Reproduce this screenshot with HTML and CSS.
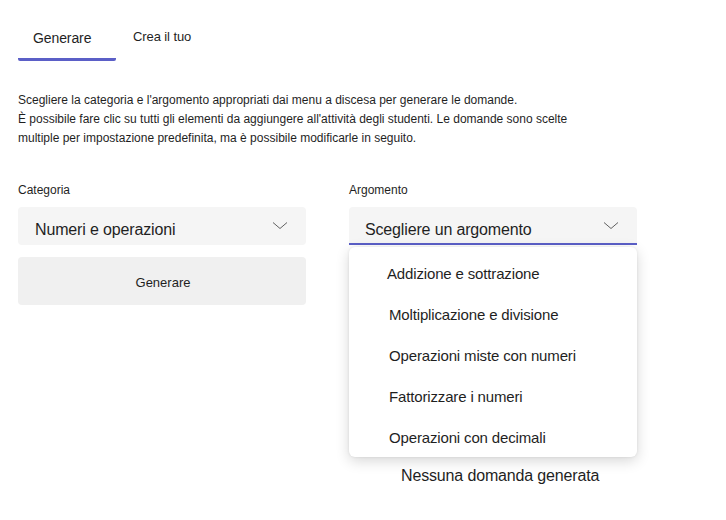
FILE: index.html
```html
<!DOCTYPE html>
<html>
<head>
<meta charset="utf-8">
<link rel="stylesheet" href="styles.css">
</head>
<body>
<div class="page">
  <div class="tabs">
    <div class="tab active">Generare</div>
    <div class="tab second">Crea il tuo</div>
  </div>
  <p class="desc">Scegliere la categoria e l'argomento appropriati dai menu a discesa per generare le domande.<br>È possibile fare clic su tutti gli elementi da aggiungere all'attività degli studenti. Le domande sono scelte multiple per impostazione predefinita, ma è possibile modificarle in seguito.</p>
  <div class="cols">
    <div class="col">
      <div class="label">Categoria</div>
      <div class="select">
        <span class="val">Numeri e operazioni</span>
        <svg class="chev" width="16" height="9" viewBox="0 0 16 9"><path d="M1 1.5 L8 7.5 L15 1.5" fill="none" stroke="#616161" stroke-width="1"/></svg>
      </div>
      <div class="btn">Generare</div>
    </div>
    <div class="col right">
      <div class="label">Argomento</div>
      <div class="select open">
        <span class="val">Scegliere un argomento</span>
        <svg class="chev" width="16" height="9" viewBox="0 0 16 9"><path d="M1 1.5 L8 7.5 L15 1.5" fill="none" stroke="#616161" stroke-width="1"/></svg>
      </div>
      <div class="empty">Nessuna domanda generata</div>
      <ul class="menu">
        <li class="first">Addizione e sottrazione</li>
        <li>Moltiplicazione e divisione</li>
        <li>Operazioni miste con numeri</li>
        <li>Fattorizzare i numeri</li>
        <li>Operazioni con decimali</li>
      </ul>
    </div>
  </div>
</div>
</body>
</html>
```
FILE: styles.css
```css
html, body { margin: 0; padding: 0; background: #fff; }
body { font-family: "Liberation Sans", Arial, sans-serif; color: #1f1f1f; }
.page { padding: 0 0 0 18px; width: 619px; }
.tabs { display: flex; padding-top: 28px; height: 34px; }
.tab { font-size: 14px; line-height: 20px; height: 33px; box-sizing: border-box; letter-spacing: -0.1px; }
.tab.active { width: 98px; padding-left: 15px; border-bottom: 3px solid #5b5fc7; border-radius: 0 0 2px 2px; }
.tab.second { font-size: 13px; margin-left: 17px; line-height: 18px; }
.desc { margin: 29px 0 0 0; font-size: 12px; line-height: 19px; width: 560px; }
.cols { display: flex; gap: 43px; margin-top: 34px; }
.col { width: 288px; position: relative; }
.label { font-size: 12px; line-height: 16px; height: 16px; }
.select { margin-top: 9px; height: 38px; background: #f5f5f5; border-radius: 4px; display: flex; align-items: center; justify-content: space-between; padding: 2px 18px 0 17px; box-sizing: border-box; font-size: 16px; letter-spacing: -0.15px; }
.select.open { border-bottom: 2px solid #5b5fc7; border-radius: 4px 4px 0 0; padding-top: 4px; padding-left: 16px; }
.val { margin-top: 6px; }
.chev { margin-top: -4px; }
.btn { margin-top: 12px; height: 48px; background: #f0f0f0; border-radius: 4px; display: flex; align-items: center; justify-content: center; font-size: 13px; padding: 3px 0 0 2px; box-sizing: border-box; }
.empty { margin-top: 221px; margin-left: 52px; font-size: 16px; line-height: 20px; letter-spacing: -0.15px; }
.menu { position: absolute; left: 0; top: 65px; width: 288px; margin: 0; padding: 6px 0 0 0; list-style: none; background: #fff; border-radius: 6px; box-shadow: 0 4px 14px rgba(0,0,0,0.16), 0 0 3px rgba(0,0,0,0.08); box-sizing: border-box; height: 210px; }
.menu li { height: 41px; line-height: 41px; padding-left: 40px; font-size: 15px; letter-spacing: -0.15px; }
.menu li.first { padding-left: 38px; }
```
